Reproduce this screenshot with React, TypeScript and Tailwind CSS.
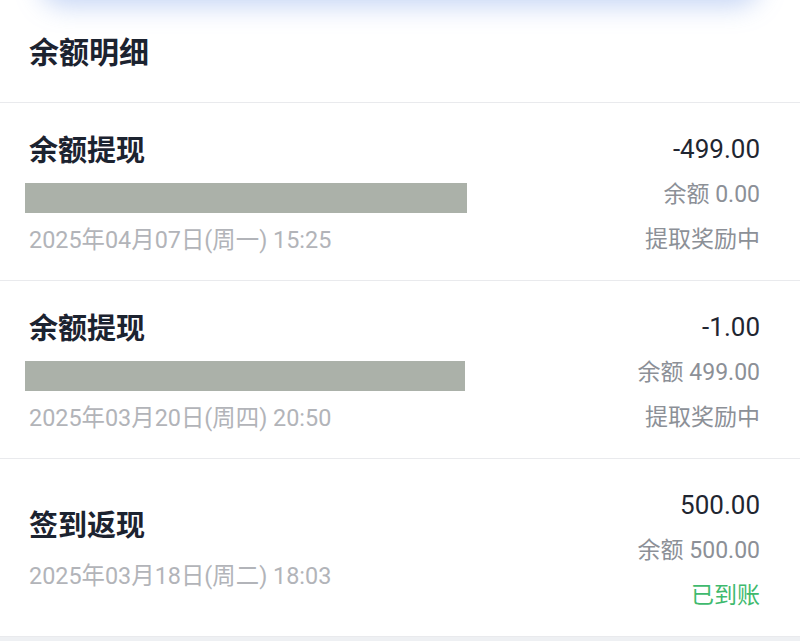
import React from "react";

// Balance detail list — header, then one row per ledger entry.

type Entry = {
  title: string;
  amount: string;
  balance: string;
  status: string;
  date: string;
  bar?: number; // width of the redacted strip, px
  done?: boolean;
};

const entries: Entry[] = [
  {
    title: "余额提现",
    amount: "-499.00",
    balance: "余额 0.00",
    status: "提取奖励中",
    date: "2025年04月07日(周一) 15:25",
    bar: 442,
  },
  {
    title: "余额提现",
    amount: "-1.00",
    balance: "余额 499.00",
    status: "提取奖励中",
    date: "2025年03月20日(周四) 20:50",
    bar: 440,
  },
  {
    title: "签到返现",
    amount: "500.00",
    balance: "余额 500.00",
    status: "已到账",
    date: "2025年03月18日(周二) 18:03",
    done: true,
  },
];

function Row({ e }: { e: Entry }) {
  return (
    <div className="flex h-[178px] items-center justify-between border-b border-[#e9eaed] pl-[25px] pr-[40px]">
      <div className="flex flex-col pt-[9px]">
        <div className="pl-[4px] text-[29px] font-bold leading-[40px] text-[#1c2330]">{e.title}</div>
        {e.bar && <div className="mt-[12px] h-[30px] bg-[#abb1a9]" style={{ width: e.bar }} />}
        <div
          className={
            e.bar
              ? "mt-[5px] pl-[4px] text-[23.4px] leading-[44px] text-[#b2b4b9]"
              : "mt-[8px] pl-[4px] text-[23.4px] leading-[44px] text-[#b2b4b9]"
          }
        >
          {e.date}
        </div>
      </div>
      <div className="flex flex-col items-end pt-[6px]">
        <div className="text-[26px] leading-[45px] text-[#1f2631]">{e.amount}</div>
        <div className="text-[23px] leading-[45px] text-[#8c9097]">{e.balance}</div>
        <div className={e.done ? "text-[23px] leading-[45px] text-[#3fba6e]" : "text-[23px] leading-[45px] text-[#8c9097]"}>
          {e.status}
        </div>
      </div>
    </div>
  );
}

export default function App() {
  return (
    <div
      className="flex h-[641px] w-[800px] flex-col overflow-hidden bg-white"
      style={{ fontFamily: "Roboto, 'Noto Sans CJK SC', sans-serif" }}
    >
      {/* bottom edge of the card above, only its glow shows */}
      <div className="relative h-0">
        <div className="absolute left-[40px] right-[40px] top-[-40px] h-[40px] rounded-b-[24px] bg-white shadow-[0_6px_26px_rgba(110,150,230,0.4)]" />
      </div>
      <div className="flex h-[103px] shrink-0 items-center border-b border-[#e9eaed] pl-[29px] pt-[2px]">
        <span className="text-[30px] font-bold text-[#1c2330]">余额明细</span>
      </div>
      {entries.map((e, i) => (
        <Row key={i} e={e} />
      ))}
      <div className="flex-1 bg-[#eef0f3]" />
    </div>
  );
}
